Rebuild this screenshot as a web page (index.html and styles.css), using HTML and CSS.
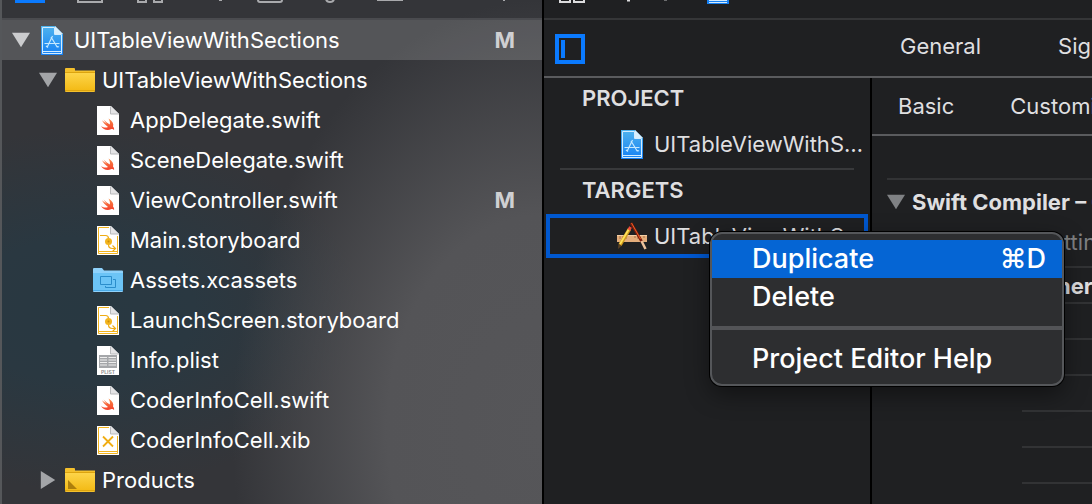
FILE: index.html
```html
<!DOCTYPE html>
<html lang="en">
<head>
  <meta charset="UTF-8" />
  <meta name="viewport" content="width=device-width, initial-scale=1.0"/>
  <title>UITableViewWithSections</title>
  <link rel="stylesheet" href="styles.css">
</head>
<body>

  <!-- Icon shapes -->
  <svg class="sprite" aria-hidden="true">
    <defs>
      <linearGradient id="blueFill" x1="0" y1="0" x2="0" y2="1">
        <stop offset="0" stop-color="#4fb4ee"/><stop offset="1" stop-color="#1680f3"/>
      </linearGradient>
      <linearGradient id="yellowFill" x1="0" y1="0" x2="0" y2="1">
        <stop offset="0" stop-color="#fdd54a"/><stop offset="1" stop-color="#f3ba14"/>
      </linearGradient>
      <linearGradient id="swiftFill" x1="0" y1="0" x2="0" y2="1">
        <stop offset="0" stop-color="#f98a45"/><stop offset="1" stop-color="#f5402c"/>
      </linearGradient>
    </defs>
    <symbol id="paper" viewBox="0 0 22 29">
      <path d="M0 0h14l8 8v21H0z" fill="#fff"/>
      <path d="M13.500 0v8H22z" fill="#e4e4e6"/>
      <path d="M13.500 .5v7.500H22" fill="none" stroke="#b9babd"/>
    </symbol>
    <symbol id="project" viewBox="0 0 22 29">
      <path d="M0 0h14l8 8v21H0z" fill="url(#blueFill)"/>
      <path d="M14 0v8h8z" fill="#d9effc"/>
      <path d="M1.500 27.500v-26H13.500v7h7v19zM1.500 25.500h19" fill="none" stroke="#d3ecff"/>
      <path d="M6 21.500l5.500-11.500M10 11l6.500 10.500M3.500 17.500h15M5 20l2 1.500M15 20l3 1" fill="none" stroke="#c5e8ff" stroke-width="1.200"/>
    </symbol>
    <symbol id="swift" viewBox="0 0 22 29">
      <use href="#paper"/>
      <path d="M11.500 12.500C15.500 15 17 18 16 20.500c1.200 1.500 1.300 2.700 1 3.500-1-1.200-2-1.200-3-.7-4 1.700-8 0-10-3.300 2.500 1.700 5 2 7 1-3-2.300-4.700-4.500-6-6.800 2 1.700 4 3.300 5 3.900-1.500-1.500-2.500-3.200-3.400-4.600 2 2 4.400 4 6.200 5.100.5-2-.2-4.200-1.300-6.100z" fill="url(#swiftFill)"/>
    </symbol>
    <symbol id="storyboard" viewBox="0 0 22 29">
      <use href="#paper"/>
      <path d="M12 1.500H1.500v26h19V10M1.500 25.500h19" fill="none" stroke="#f3b51f"/>
      <path d="M3 9.500h5.500q3 0 3 3v6q0 4 4 4h3M15.500 19.500l3 3-3 3" fill="none" stroke="#efac14" stroke-width="1.200"/>
      <circle cx="11.500" cy="15.500" r="3.500" fill="#f3b51f"/>
      <circle cx="11.500" cy="15.500" r="1" fill="#c98d0c"/>
    </symbol>
    <symbol id="xib" viewBox="0 0 22 29">
      <use href="#paper"/>
      <path d="M12 1.500H1.500v26h19V10M1.500 25.500h19" fill="none" stroke="#f3b51f"/>
      <path d="M6 10.500l10 10M16 10.500l-10 10" fill="none" stroke="#f0ad14" stroke-width="1.800"/>
    </symbol>
    <symbol id="plist" viewBox="0 0 22 29">
      <use href="#paper"/>
      <path d="M2 9h18v13H2z" fill="#a5a7aa"/>
      <path d="M3 11.500h7M3 14h7M3 16.500h7M3 19h7M11.500 11.500H19M11.500 14H19M11.500 16.500H19M11.500 19H19" stroke="#eee"/>
      <text x="11" y="28" text-anchor="middle" font-family="Inter, sans-serif" font-size="5" font-weight="600" fill="#888">PLIST</text>
    </symbol>
    <symbol id="folder" viewBox="0 0 30 24">
      <path d="M0 1q0-1 1-1h8q1 0 1 1v1.500h20V23q0 1-1 1H1q-1 0-1-1z" fill="#f4c02c"/>
      <path d="M0 5h30v18H0z" fill="url(#yellowFill)"/>
      <path d="M0 4.500h30M0 22.500h30" stroke="#dca40f"/>
    </symbol>
    <symbol id="folder-group" viewBox="0 0 30 24">
      <use href="#folder"/>
      <path d="M3 12l9 9H3z" fill="#ad7f0c"/>
    </symbol>
    <symbol id="assets" viewBox="0 0 30 24">
      <path d="M0 1q0-1 1-1h8l2 2.500h18q1 0 1 1V23q0 1-1 1H1q-1 0-1-1z" fill="#8fd2fb"/>
      <path d="M0 5h30v18H0z" fill="#6cc4f6"/>
      <path d="M0 22.500h30" stroke="#4aaae6"/>
      <path d="M7.500 8.500h11v8h-11zM20 11.500h2.500v8h-10V18" fill="none" stroke="#2b8dcb"/>
    </symbol>
    <symbol id="app" viewBox="0 0 30 28">
      <path d="M0 13h30v7H0z" fill="#e3ad7b"/>
      <path d="M0 13.500h30" stroke="#f4cfa5"/>
      <path d="M3 14v3M6 14v2M9 14v3M18 14v2M21 14v3M27 14v2" stroke="#a87346"/>
      <path d="M14 1l11 19" stroke="#7c1d0c" stroke-width="2.500"/>
      <path d="M14.500 1l9 16" stroke="#ef5d24" stroke-width="1"/>
      <path d="M24.500 19l4 8" stroke="#efc39c" stroke-width="2.500"/>
      <path d="M12.500 7L3 23" stroke="#cf971c" stroke-width="3.500"/>
      <path d="M12 7L3 22" stroke="#ffe35a" stroke-width="1.800"/>
      <path d="M13.500 5l-1.500 3" stroke="#ef4b3c" stroke-width="3"/>
      <path d="M1.500 22l3 2-3.500 3z" fill="#5b4124"/>
    </symbol>
  </svg>

  <!-- Project navigator -->
  <aside class="navigator">
    <div class="navigator-bar">
      <svg width="540" height="8" viewBox="0 0 540 8" fill="none" stroke="#a9aaad" stroke-width="2">
        <path d="M13 0h30v3H13z" fill="#0a7aff" stroke="none"/>
        <path d="M76 -2v4h24v-4M136 -2v4h8v-4M152 -2v4h8v-4M256 -2v2q0 2 2 2h20q2 0 2-2v-2M375 0h26M324 -2q0 4 4 4t4-4M217 0h3M501 0h2"/>
      </svg>
    </div>
    <ul class="tree">
      <li class="row selected">
        <button class="arrow open" aria-label="Collapse project"></button>
        <svg class="file-icon"><use href="#project"/></svg>
        <span class="name">UITableViewWithSections</span>
        <span class="status">M</span>
      </li>
      <li class="row level-1">
        <button class="arrow open" aria-label="Collapse group"></button>
        <svg class="folder-icon"><use href="#folder"/></svg>
        <span class="name">UITableViewWithSections</span>
      </li>
      <li class="row level-2">
        <svg class="file-icon"><use href="#swift"/></svg>
        <span class="name">AppDelegate.swift</span>
      </li>
      <li class="row level-2">
        <svg class="file-icon"><use href="#swift"/></svg>
        <span class="name">SceneDelegate.swift</span>
      </li>
      <li class="row level-2">
        <svg class="file-icon"><use href="#swift"/></svg>
        <span class="name">ViewController.swift</span>
        <span class="status">M</span>
      </li>
      <li class="row level-2">
        <svg class="file-icon"><use href="#storyboard"/></svg>
        <span class="name">Main.storyboard</span>
      </li>
      <li class="row level-2 wide">
        <svg class="folder-icon"><use href="#assets"/></svg>
        <span class="name">Assets.xcassets</span>
      </li>
      <li class="row level-2">
        <svg class="file-icon"><use href="#storyboard"/></svg>
        <span class="name">LaunchScreen.storyboard</span>
      </li>
      <li class="row level-2">
        <svg class="file-icon"><use href="#plist"/></svg>
        <span class="name">Info.plist</span>
      </li>
      <li class="row level-2">
        <svg class="file-icon"><use href="#swift"/></svg>
        <span class="name">CoderInfoCell.swift</span>
      </li>
      <li class="row level-2">
        <svg class="file-icon"><use href="#xib"/></svg>
        <span class="name">CoderInfoCell.xib</span>
      </li>
      <li class="row level-1">
        <button class="arrow" aria-label="Expand Products"></button>
        <svg class="folder-icon"><use href="#folder-group"/></svg>
        <span class="name">Products</span>
      </li>
    </ul>
  </aside>

  <!-- Project editor -->
  <main class="editor">
    <div class="jump-bar">
      <svg width="190" height="8" viewBox="0 0 190 8" fill="none" stroke="#dcdcde" stroke-width="2">
        <path d="M16 -2v4h10v-4M30 -2v4h10v-4"/>
        <path d="M83 0h3" stroke-width="3"/>
        <path d="M120 0h3" stroke="#6b6c6e"/>
        <path d="M163 0h22v4h-22z" fill="#1680f3" stroke="none"/>
        <path d="M165 0h18v1h-18zM165 2h18v1h-18z" fill="#d3ecff" stroke="none"/>
      </svg>
    </div>
    <nav class="tabs">
      <button class="outline-toggle" aria-label="Toggle targets list"><span></span></button>
      <button class="tab">General</button>
      <button class="tab">Signing &amp; Capabilities</button>
    </nav>

    <div class="panes">
      <section class="targets">
        <h2>PROJECT</h2>
        <div class="target">
          <svg class="file-icon"><use href="#project"/></svg>
          <span>UITableViewWithSections</span>
        </div>
        <hr>
        <h2>TARGETS</h2>
        <div class="target active">
          <svg class="app-icon"><use href="#app"/></svg>
          <span>UITableViewWithSections</span>
        </div>
      </section>

      <section class="settings">
        <div class="filters">
          <button class="tab">Basic</button>
          <button class="tab">Customized</button>
        </div>
        <div class="group">
          <button class="arrow open" aria-label="Collapse section"></button>
          <h3>Swift Compiler – Custom Flags</h3>
        </div>
        <div class="setting-head">Setting</div>
        <div class="setting-name">Other Swift Flags</div>
        <div class="line"></div>
        <div class="line"></div>
        <div class="line"></div>
        <div class="line"></div>
        <div class="line"></div>
      </section>
    </div>
  </main>

  <!-- Context menu -->
  <div class="menu" role="menu">
    <button class="menu-item highlighted" role="menuitem"><span>Duplicate</span><span>⌘D</span></button>
    <button class="menu-item" role="menuitem">Delete</button>
    <hr>
    <button class="menu-item" role="menuitem">Project Editor Help</button>
  </div>

</body>
</html>
```
FILE: styles.css
```css
* {
  box-sizing: border-box;
}

body {
  margin: 0;
  display: flex;
  height: 100vh;
  overflow: hidden;
  background: #1f2022;
  color: #dfdfe0;
  font-family: Inter, "Liberation Sans", sans-serif;
  font-size: 22px;
  line-height: 28px;
}

button {
  padding: 0;
  border: none;
  background: none;
  color: inherit;
  font: inherit;
  white-space: nowrap;
}

h2, h3, ul, hr {
  margin: 0;
  padding: 0;
}

svg {
  display: block;
  flex: none;
}

.sprite {
  position: absolute;
  width: 0;
  height: 0;
}

.file-icon {
  width: 22px;
  height: 29px;
}

.folder-icon {
  width: 30px;
  height: 24px;
}

.app-icon {
  width: 30px;
  height: 28px;
}

.arrow {
  flex: none;
  width: 18px;
  height: 18px;
  background: #a3a5a8;
  clip-path: polygon(10% 0, 90% 50%, 10% 100%);
}

.arrow.open {
  clip-path: polygon(0 10%, 100% 10%, 50% 90%);
}

/* navigator */
.navigator {
  flex: none;
  width: 544px;
  border-left: 2px solid #55575a;
  border-right: 2px solid #000;
  background:
    radial-gradient(ellipse 310px 430px at 540px 430px, #565659 0%, #545457 50%, rgba(84, 84, 87, 0) 100%),
    radial-gradient(ellipse 280px 180px at 80px 310px, #283841 0%, #2a3841 40%, rgba(42, 57, 66, 0) 100%),
    #343539;
  color: #fff;
}

.navigator-bar {
  height: 20px;
  border-bottom: 2px solid #4a4b4f;
}

.tree {
  list-style: none;
}

.row {
  display: flex;
  align-items: center;
  height: 40px;
  padding: 0 27px 0 10px;
}

.row.selected {
  background: rgba(255, 255, 255, 0.16);
}

.row.selected .arrow {
  background: #cbccce;
}

.row.level-1 {
  padding-left: 37px;
}

.row.level-2 {
  padding-left: 95px;
}

.row.level-2.wide {
  padding-left: 91px;
}

.row .file-icon {
  margin: 0 11px;
}

.row .folder-icon {
  margin: 0 7px 0 8px;
}

.level-2 .file-icon,
.level-2 .folder-icon {
  margin-left: 0;
}

.name {
  flex: 1;
}

.status {
  color: #d0d0d2;
  font-weight: 700;
}

/* editor */
.editor {
  flex: 1;
  display: flex;
  flex-direction: column;
  min-width: 0;
}

.jump-bar {
  height: 20px;
  border-bottom: 2px solid #353638;
}

.tabs {
  display: flex;
  align-items: flex-start;
  height: 58px;
  padding: 12px 0 0 11px;
  border-bottom: 2px solid #5a5b5e;
  overflow: hidden;
}

.outline-toggle {
  flex: none;
  width: 30px;
  height: 30px;
  margin: 2px 315px 0 0;
  padding: 2px;
  border: 4px solid #0a7aff;
}

.outline-toggle span {
  display: block;
  width: 4px;
  height: 18px;
  background: #0a7aff;
}

.tab + .tab {
  margin-left: 77px;
}

.panes {
  flex: 1;
  display: flex;
  min-height: 0;
}

.targets {
  flex: none;
  width: 328px;
  padding: 0 2px;
  border-right: 2px solid #000;
}

.targets h2 {
  padding: 6px 0 6px 36px;
  font-size: 22px;
  font-weight: 600;
}

.targets hr {
  margin: 2px 14px 0;
  border: none;
  border-top: 2px solid #38393b;
}

.target {
  display: flex;
  align-items: center;
  height: 44px;
  margin-top: 4px;
  padding-left: 75px;
}

.target .file-icon {
  margin-right: 11px;
}

.target span {
  overflow: hidden;
  text-overflow: ellipsis;
  white-space: nowrap;
}

.target.active {
  padding-left: 67px;
  border: 4px solid #0058d0;
}

.target .app-icon {
  margin-right: 7px;
}

.settings {
  flex: 1;
  min-width: 0;
  overflow: hidden;
}

.filters {
  display: flex;
  height: 58px;
  padding-left: 26px;
  border-bottom: 2px solid #5a5b5e;
}

.filters .tab + .tab {
  margin-left: 56px;
}

.group {
  display: flex;
  align-items: center;
  gap: 7px;
  height: 46px;
  margin: 42px 0 0 15px;
  border-top: 2px solid #323335;
}

.group .arrow {
  background: #7f8184;
}

.group h3 {
  font-size: 22px;
  font-weight: 700;
  white-space: nowrap;
}

.setting-head {
  padding: 4px 0 10px 165px;
  border-bottom: 2px solid #323335;
  color: #7f8082;
}

.setting-name {
  padding: 4px 0 2px 160px;
  border-bottom: 2px solid #323335;
  font-weight: 700;
  white-space: nowrap;
}

.line {
  height: 36px;
  margin-left: 150px;
  border-bottom: 2px solid #323335;
}

/* context menu */
.menu {
  position: absolute;
  left: 710px;
  top: 232px;
  width: 354px;
  padding: 6px 0;
  border: 2px solid #55575a;
  border-radius: 12px;
  background: #2d2e30;
  box-shadow: 0 0 0 1px #000, 0 8px 24px rgba(0, 0, 0, 0.45);
  color: #fff;
  font-size: 27px;
  font-weight: 500;
  line-height: 38px;
}

.menu-item {
  display: flex;
  justify-content: space-between;
  width: 100%;
  padding: 0 16px 0 40px;
}

.menu-item.highlighted {
  background: #0565d4;
}

.menu hr {
  margin: 10px 0;
  border: none;
  border-top: 4px solid #535457;
}
```
